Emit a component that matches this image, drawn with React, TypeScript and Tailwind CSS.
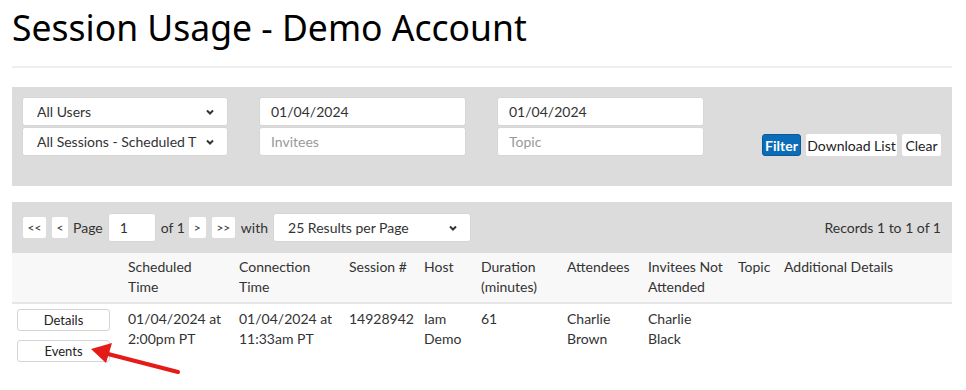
import React from "react";

const body = "font-['Lato','Liberation_Sans',sans-serif]";

const Chevron = () => (
  <svg width="10" height="10" viewBox="0 0 10 10" className="shrink-0">
    <path d="M2 3.5 L5 6.5 L8 3.5" fill="none" stroke="#333" strokeWidth="2" />
  </svg>
);

const SelectBox = ({ label, className }: { label: string; className: string }) => (
  <div
    className={`flex h-[29px] items-center justify-between gap-[8px] rounded-[3px] border border-[#d6d6d6] bg-white pl-[14px] pr-[12px] text-[14px] text-[#333] ${className}`}
  >
    <span className="overflow-hidden whitespace-nowrap">{label}</span>
    <Chevron />
  </div>
);

const TextBox = ({ value, placeholder }: { value?: string; placeholder?: string }) => (
  <div className="flex h-[29px] w-[207px] items-center rounded-[3px] border border-[#d6d6d6] bg-white px-[11px] text-[14px]">
    {value ? (
      <span className="text-[#333]">{value}</span>
    ) : (
      <span className="text-[#999]">{placeholder}</span>
    )}
  </div>
);

const PagerBtn = ({ label, w }: { label: string; w: string }) => (
  <div
    className={`flex h-[21px] ${w} items-center justify-center rounded-[2px] bg-white text-[12px] text-[#333]`}
  >
    {label}
  </div>
);

const columns = [
  { label: "Scheduled Time", pr: "pr-[16px]" },
  { label: "Connection Time", pr: "pr-[6px]" },
  { label: "Session #", pr: "pr-[4px]" },
  { label: "Host", pr: "pr-[4px]" },
  { label: "Duration (minutes)", pr: "pr-[4px]" },
  { label: "Attendees", pr: "pr-[6px]" },
  { label: "Invitees Not Attended", pr: "pr-[4px]" },
  { label: "Topic", pr: "pr-[4px]" },
  { label: "Additional Details", pr: "pr-[4px]" },
];

const grid =
  "grid grid-cols-[116px_111px_110px_75px_57px_86px_81px_90px_46px_1fr]";

export default function App() {
  return (
    <div className={`relative min-h-[390px] w-[966px] bg-white ${body} text-[#333]`}>
      <div className="px-[12px]">
        <h1 className="pt-[1px] font-['Noto_Sans','Open_Sans',sans-serif] text-[35.5px] leading-[52px] text-black">
          Session Usage - Demo Account
        </h1>
        <div className="mt-[13px] h-[2px] w-[940px] bg-[#eeeeee]" />

        {/* filters */}
        <div className="mt-[19px] flex h-[99px] w-[940px] items-start bg-[#dcdcdc] px-[10px] pt-[10px]">
          <div className="flex w-[206px] flex-col gap-[1px]">
            <SelectBox label="All Users" className="w-[206px]" />
            <SelectBox label="All Sessions - Scheduled Time" className="w-[206px]" />
          </div>
          <div className="ml-[31px] flex flex-col gap-[1px]">
            <TextBox value="01/04/2024" />
            <TextBox placeholder="Invitees" />
          </div>
          <div className="ml-[31px] flex flex-col gap-[1px]">
            <TextBox value="01/04/2024" />
            <TextBox placeholder="Topic" />
          </div>
          <div className="ml-[58px] mt-[37px] flex gap-[5px] text-[14px]">
            <div className="flex h-[22px] w-[39px] items-center justify-center rounded-[3px] border border-[#0a5a99] bg-[#0b6cb7] font-bold text-white">
              Filter
            </div>
            <div className="flex h-[22px] w-[91px] items-center justify-center rounded-[2px] bg-white text-[#222]">
              Download List
            </div>
            <div className="flex h-[22px] w-[39px] items-center justify-center rounded-[2px] bg-white text-[#222]">
              Clear
            </div>
          </div>
        </div>

        {/* pager */}
        <div className="mt-[16px] flex h-[51px] w-[940px] items-center bg-[#dcdcdc] pl-[11px] pr-[11px] text-[14px]">
          <PagerBtn label="<<" w="w-[23px]" />
          <div className="ml-[6px]">
            <PagerBtn label="<" w="w-[16px]" />
          </div>
          <span className="ml-[5px]">Page</span>
          <div className="ml-[5px] flex h-[29px] w-[48px] items-center rounded-[3px] border border-[#d6d6d6] bg-white pl-[11px]">
            1
          </div>
          <span className="ml-[5px]">of 1</span>
          <div className="ml-[4px]">
            <PagerBtn label=">" w="w-[17px]" />
          </div>
          <div className="ml-[6px]">
            <PagerBtn label=">>" w="w-[23px]" />
          </div>
          <span className="ml-[6px]">with</span>
          <SelectBox label="25 Results per Page" className="ml-[5px] w-[198px]" />
          <span className="ml-auto">Records 1 to 1 of 1</span>
        </div>

        {/* table */}
        <div className="w-[940px] text-[14px] leading-[20px]">
          <div className={`${grid} h-[51px] border-b-2 border-[#e6e6e6] bg-[#f8f8f8] pt-[4px]`}>
            <div />
            {columns.map((c) => (
              <div key={c.label} className={c.pr}>
                {c.label}
              </div>
            ))}
          </div>
          <div className={`${grid} pt-[5px]`}>
            <div className="flex flex-col gap-[9px] pl-[5px]">
              <div className="flex h-[22px] w-[93px] items-center justify-center rounded-[3px] border border-[#d4d4d4] bg-white text-[13px] text-[#222]">
                Details
              </div>
              <div className="flex h-[22px] w-[93px] items-center justify-center rounded-[3px] border border-[#d4d4d4] bg-white text-[13px] text-[#222]">
                Events
              </div>
            </div>
            <div className="pr-[16px]">01/04/2024 at 2:00pm PT</div>
            <div className="pr-[6px]">01/04/2024 at 11:33am PT</div>
            <div>14928942</div>
            <div>Iam Demo</div>
            <div>61</div>
            <div className="pr-[6px]">Charlie Brown</div>
            <div className="pr-[22px]">Charlie Black</div>
            <div />
            <div />
          </div>
        </div>
      </div>

      {/* annotation arrow */}
      <svg className="absolute left-0 top-[335px]" width="200" height="50" viewBox="0 335 200 50">
        <line x1="178" y1="372" x2="108" y2="354" stroke="#e41b17" strokeWidth="4" strokeLinecap="round" />
        <polygon points="91,349 112,343 106,363" fill="#e41b17" />
      </svg>
    </div>
  );
}
